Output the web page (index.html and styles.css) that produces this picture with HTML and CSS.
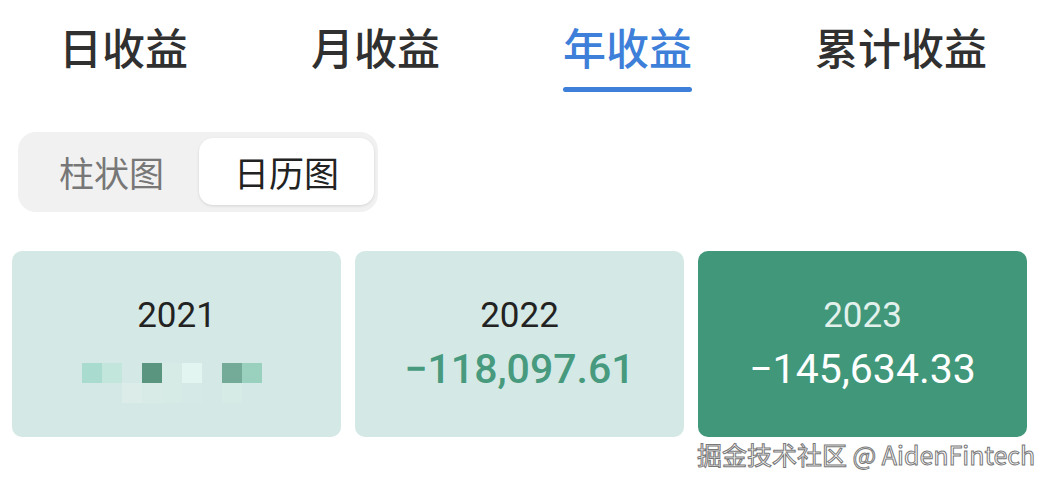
FILE: index.html
```html
<!DOCTYPE html>
<html lang="zh-CN">
<head>
  <meta charset="UTF-8">
  <title>年收益</title>
  <link rel="stylesheet" href="styles.css">
</head>
<body>
  <div class="page">
    <div class="tabs">
      <div class="tab">日收益</div>
      <div class="tab">月收益</div>
      <div class="tab active">年收益</div>
      <div class="tab">累计收益</div>
    </div>

    <div class="seg">
      <div class="seg-item">柱状图</div>
      <div class="seg-item on">日历图</div>
    </div>

    <div class="cards">
      <div class="card">
        <div class="year">2021</div>
        <div class="mosaic">
          <span style="background:#a9dccf"></span>
          <span style="background:#c2e6dc"></span>
          <span></span>
          <span style="background:#5a957f"></span>
          <span style="background:#d6ebe6"></span>
          <span style="background:#e2f5f0"></span>
          <span></span>
          <span style="background:#74ab98"></span>
          <span style="background:#9ad1be"></span>
          <span></span>
          <span></span>
          <span style="background:#dcece8"></span>
          <span style="background:#d8ebe7"></span>
          <span style="background:#d6ebe6"></span>
          <span style="background:#d5eae6"></span>
          <span></span>
          <span style="background:#d6ebe6"></span>
          <span></span>
        </div>
      </div>
      <div class="card">
        <div class="year">2022</div>
        <div class="amount">−118,097.61</div>
      </div>
      <div class="card dark">
        <div class="year">2023</div>
        <div class="amount">−145,634.33</div>
      </div>
    </div>

    <div class="mark">掘金技术社区 @ AidenFintech</div>
  </div>
</body>
</html>
```

FILE: styles.css
```css
body {
  margin: 0;
  background: #fff;
  font-family: Roboto, "Noto Sans CJK SC", sans-serif;
}

.page {
  position: relative;
  width: 1056px;
  height: 482px;
  overflow: hidden;
}

.tabs {
  display: flex;
  gap: 123px;
  padding: 20px 0 0 59px;
  height: 72px;
}

.tab {
  font-family: "Noto Sans CJK SC", sans-serif;
  font-size: 43px;
  font-weight: 500;
  color: #303030;
  line-height: 52px;
  height: 72px;
  position: relative;
}

.tab.active {
  color: #3d7fd9;
}

.tab.active::after {
  content: "";
  position: absolute;
  left: 0;
  right: 0;
  bottom: 0;
  height: 5px;
  border-radius: 3px;
  background: #3d7fd9;
}

.seg {
  display: flex;
  width: 360px;
  height: 80px;
  box-sizing: border-box;
  margin: 40px 0 0 18px;
  padding: 6px 4px 7px 6px;
  background: #f1f1f1;
  border-radius: 18px;
}

.seg-item {
  flex: 1;
  display: flex;
  align-items: center;
  justify-content: center;
  font-family: "Noto Sans CJK SC", sans-serif;
  font-size: 35px;
  color: #777;
  border-radius: 14px;
}

.seg-item.on {
  background: #fff;
  color: #222;
  box-shadow: 0 1px 3px rgba(0,0,0,0.12);
}

.cards {
  display: flex;
  gap: 14px;
  margin: 39px 0 0 12px;
}

.card {
  width: 329px;
  height: 186px;
  background: #d4e9e5;
  border-radius: 10px;
  display: flex;
  flex-direction: column;
  align-items: center;
  padding-top: 44px;
  box-sizing: border-box;
}

.year {
  font-size: 35px;
  line-height: 42px;
  color: #222;
}

.amount {
  font-size: 41px;
  line-height: 56px;
  margin-top: 4px;
  color: #479a7e;
  font-weight: 500;
}

.card.dark {
  background: #41977a;
}

.card.dark .year {
  color: #e2f1ec;
}

.card.dark .amount {
  color: #fff;
  font-weight: 400;
}

.mosaic {
  display: grid;
  grid-template-columns: repeat(9, 20px);
  grid-auto-rows: 20px;
  margin-top: 26px;
  margin-right: 10px;
  filter: blur(0.6px);
}

.mark {
  position: absolute;
  left: 697px;
  top: 436px;
  font-family: "Noto Sans CJK SC", sans-serif;
  font-size: 25px;
  color: #fff;
  -webkit-text-stroke: 1px #777;
}
```
